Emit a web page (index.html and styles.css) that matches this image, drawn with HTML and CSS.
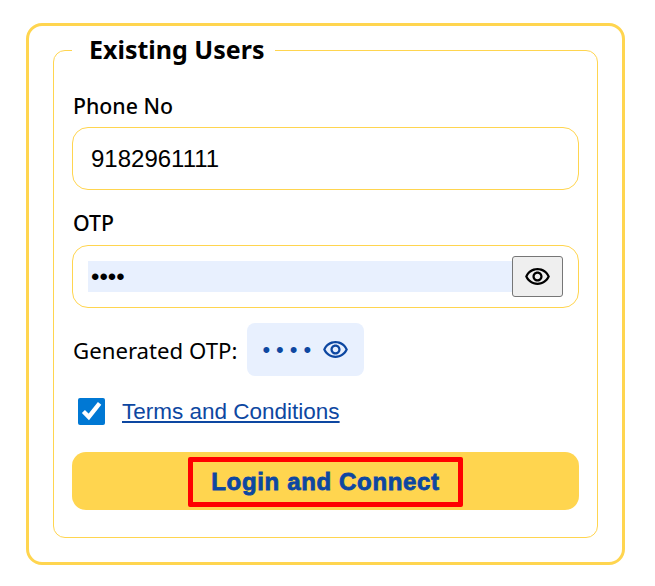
FILE: index.html
```html
<!DOCTYPE html>
<html lang="en">
<head>
    <meta charset="UTF-8">
    <meta name="viewport" content="width=device-width, initial-scale=1.0">
    <title>Existing Users</title>
    <link rel="stylesheet" href="styles.css">
</head>
<body>

<div class="login-card">
    <fieldset class="login-box">
        <legend>Existing Users</legend>

        <label class="field-label" for="phone">Phone No</label>
        <div class="input-box">
            <input class="text-input" id="phone" type="text" value="9182961111">
        </div>

        <label class="field-label otp-label" for="otp">OTP</label>
        <div class="input-box otp-box">
            <input class="text-input otp-input" id="otp" type="password" value="1234">
            <button class="eye-btn" type="button" aria-label="Show OTP">
                <svg class="eye" viewBox="0 0 24 24"><path d="M12 6.5c3.79 0 7.17 2.13 8.82 5.5-1.65 3.37-5.02 5.5-8.82 5.5S4.83 15.37 3.18 12C4.83 8.63 8.21 6.5 12 6.5m0-2C7 4.5 2.73 7.61 1 12c1.73 4.39 6 7.5 11 7.5s9.27-3.11 11-7.5c-1.73-4.39-6-7.5-11-7.5zm0 5c1.38 0 2.5 1.12 2.5 2.5s-1.12 2.5-2.5 2.5-2.5-1.12-2.5-2.5 1.12-2.5 2.5-2.5m0-2c-2.48 0-4.5 2.02-4.5 4.5s2.02 4.5 4.5 4.5 4.5-2.02 4.5-4.5-2.02-4.5-4.5-4.5z"/></svg>
            </button>
        </div>

        <div class="generated">
            <span class="generated-label">Generated OTP:</span>
            <div class="otp-chip">
                <span class="otp-dots">••••</span>
                <svg class="eye" viewBox="0 0 24 24"><path d="M12 6.5c3.79 0 7.17 2.13 8.82 5.5-1.65 3.37-5.02 5.5-8.82 5.5S4.83 15.37 3.18 12C4.83 8.63 8.21 6.5 12 6.5m0-2C7 4.5 2.73 7.61 1 12c1.73 4.39 6 7.5 11 7.5s9.27-3.11 11-7.5c-1.73-4.39-6-7.5-11-7.5zm0 5c1.38 0 2.5 1.12 2.5 2.5s-1.12 2.5-2.5 2.5-2.5-1.12-2.5-2.5 1.12-2.5 2.5-2.5m0-2c-2.48 0-4.5 2.02-4.5 4.5s2.02 4.5 4.5 4.5 4.5-2.02 4.5-4.5-2.02-4.5-4.5-4.5z"/></svg>
            </div>
        </div>

        <div class="terms">
            <input class="terms-check" type="checkbox" checked>
            <a href="#">Terms and Conditions</a>
        </div>

        <button class="login-btn" type="button"><span>Login and Connect</span></button>
    </fieldset>
</div>

</body>
</html>
```

FILE: styles.css
```css
* {box-sizing: border-box; margin: 0; padding: 0;}

body {
    font-family: 'Noto Sans', sans-serif;
    background: #fff;
    color: #000;
    padding: 23px 30px 21px 26px;
}

.login-card {
    border: 3px solid #ffd54f;
    border-radius: 16px;
    padding: 8px 24px 24px 24px;
}

.login-box {
    border: 1px solid #ffd54f;
    border-radius: 12px;
    padding: 0 18px 27px 18px;
}

legend {
    font-size: 25px;
    font-weight: 700;
    line-height: 31px;
    padding: 0 11px 2px 17px;
}

.field-label {
    display: block;
    font-size: 21.3px;
    font-weight: 500;
    line-height: 28px;
    margin-top: 25px;
    margin-bottom: 7px;
    padding-left: 1px;
}

.otp-label {
    margin-top: 19px;
    margin-bottom: 8px;
}

.input-box {
    display: flex;
    align-items: center;
    height: 63px;
    border: 1px solid #ffd54f;
    border-radius: 16px;
    padding: 0 15px;
}

.text-input {
    width: 100%;
    border: none;
    outline: none;
    background: transparent;
    font-family: 'Liberation Sans', sans-serif;
    font-size: 24px;
    color: #000;
    padding-left: 3px;
}

.otp-input {
    flex: 1;
    min-width: 0;
    height: 31px;
    background: #e8f0fe;
    padding-left: 3px;
}

.eye-btn {
    flex: none;
    display: flex;
    align-items: center;
    justify-content: center;
    width: 51px;
    height: 41px;
    background: #efefef;
    border: 1px solid #767676;
    border-radius: 3px;
}

.eye {
    width: 27px;
    height: 27px;
    fill: #000;
}

.generated {
    display: flex;
    align-items: center;
    gap: 10px;
    font-size: 22.2px;
    margin-top: 15px;
    padding-left: 1px;
}

.generated-label {
    margin-top: 2px;
}

.otp-chip {
    display: flex;
    align-items: center;
    gap: 5px;
    height: 53px;
    padding: 0 15px;
    background: #e8f0fe;
    border-radius: 8px;
    color: #0d47a1;
}

.otp-chip .eye {
    fill: #0d47a1;
}

.otp-dots {
    font-family: 'Liberation Sans', sans-serif;
    font-size: 22px;
    letter-spacing: 6px;
}

.terms {
    display: flex;
    align-items: center;
    gap: 17px;
    margin-top: 22px;
    padding-left: 6px;
}

.terms-check {
    width: 27px;
    height: 27px;
    accent-color: #0078d4;
}

.terms a {
    font-family: 'Liberation Sans', sans-serif;
    font-size: 22.5px;
    color: #0d47a1;
}

.login-btn {
    display: flex;
    align-items: center;
    justify-content: center;
    width: 100%;
    height: 58px;
    margin-top: 27px;
    background: #ffd54f;
    border: none;
    border-radius: 14px;
    font-family: 'Liberation Sans', sans-serif;
    font-size: 24px;
    font-weight: 700;
    letter-spacing: 0.65px;
    color: #0d47a1;
}

.login-btn span {
    border: 5px solid #f00;
    border-radius: 2px;
    margin-top: 2px;
    padding: 6px 18px;
    -webkit-text-stroke: 0.8px #0d47a1;
}
```
